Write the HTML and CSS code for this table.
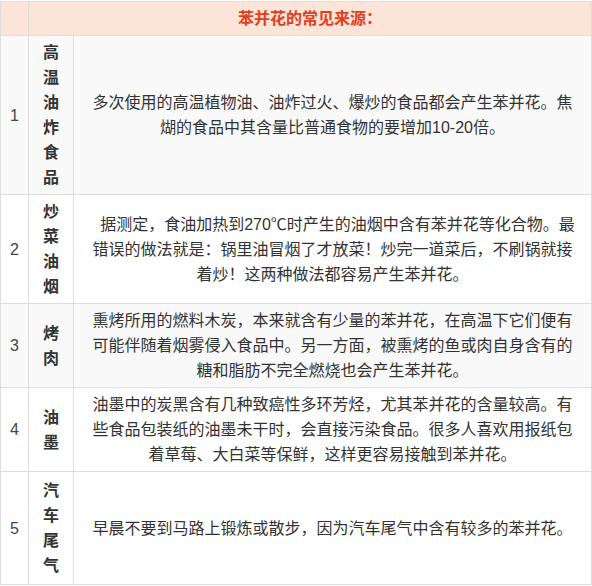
FILE: index.html
```html
<!DOCTYPE html>
<html lang="zh">
<head>
<meta charset="utf-8">
<link rel="stylesheet" href="styles.css">
</head>
<body>
<table class="src">
  <colgroup>
    <col class="c-num">
    <col class="c-name">
    <col class="c-desc">
  </colgroup>
  <thead>
    <tr class="head">
      <th></th>
      <th colspan="2">苯并花的常见来源：</th>
    </tr>
  </thead>
  <tbody>
    <tr class="r1 alt">
      <td class="num">1</td>
      <td class="name">高温油炸食品</td>
      <td class="desc">多次使用的高温植物油、油炸过火、爆炒的食品都会产生苯并花。焦煳的食品中其含量比普通食物的要增加10-20倍。</td>
    </tr>
    <tr class="r2">
      <td class="num">2</td>
      <td class="name">炒菜油烟</td>
      <td class="desc"><span class="lead"></span>据测定，食油加热到270℃时产生的油烟中含有苯并花等化合物。最错误的做法就是：锅里油冒烟了才放菜！炒完一道菜后，不刷锅就接着炒！这两种做法都容易产生苯并花。</td>
    </tr>
    <tr class="r3 alt">
      <td class="num">3</td>
      <td class="name">烤肉</td>
      <td class="desc">熏烤所用的燃料木炭，本来就含有少量的苯并花，在高温下它们便有可能伴随着烟雾侵入食品中。另一方面，被熏烤的鱼或肉自身含有的糖和脂肪不完全燃烧也会产生苯并花。</td>
    </tr>
    <tr class="r4">
      <td class="num">4</td>
      <td class="name">油墨</td>
      <td class="desc">油墨中的炭黑含有几种致癌性多环芳烃，尤其苯并花的含量较高。有些食品包装纸的油墨未干时，会直接污染食品。很多人喜欢用报纸包着草莓、大白菜等保鲜，这样更容易接触到苯并花。</td>
    </tr>
    <tr class="r5">
      <td class="num">5</td>
      <td class="name">汽车尾气</td>
      <td class="desc">早晨不要到马路上锻炼或散步，因为汽车尾气中含有较多的苯并花。</td>
    </tr>
  </tbody>
</table>
</body>
</html>
```

FILE: styles.css
```css
html, body {
  margin: 0;
  padding: 0;
  background: #ffffff;
}

body {
  padding-top: 1px;
  font-family: "Liberation Sans", "Noto Sans CJK SC", sans-serif;
  font-size: 16px;
  color: #333333;
}

.src {
  width: 591px;
  border-collapse: collapse;
  table-layout: fixed;
  border: 1px solid #dddddd;
}

.c-num { width: 28px; }
.c-name { width: 45px; }
.c-desc { width: 518px; }

.src th,
.src td {
  border: 1px solid #dddddd;
  padding: 4px 10px;
  line-height: 25px;
  text-align: center;
  vertical-align: middle;
}

.head th {
  background: #fce4d9;
  color: #e2401b;
  font-weight: bold;
  height: 24px;
  padding: 4px 0;
}

.alt td {
  background: #f9f9f9;
}

.src td.num {
  padding: 0;
  color: #444444;
}

.src td.name {
  padding: 4px 14px;
  font-weight: bold;
  color: #333333;
  word-break: break-all;
}

.src td.desc {
  padding: 4px 11px;
}

.lead {
  display: inline-block;
  width: 10px;
}

.r5 td {
  height: 104px;
}
```
